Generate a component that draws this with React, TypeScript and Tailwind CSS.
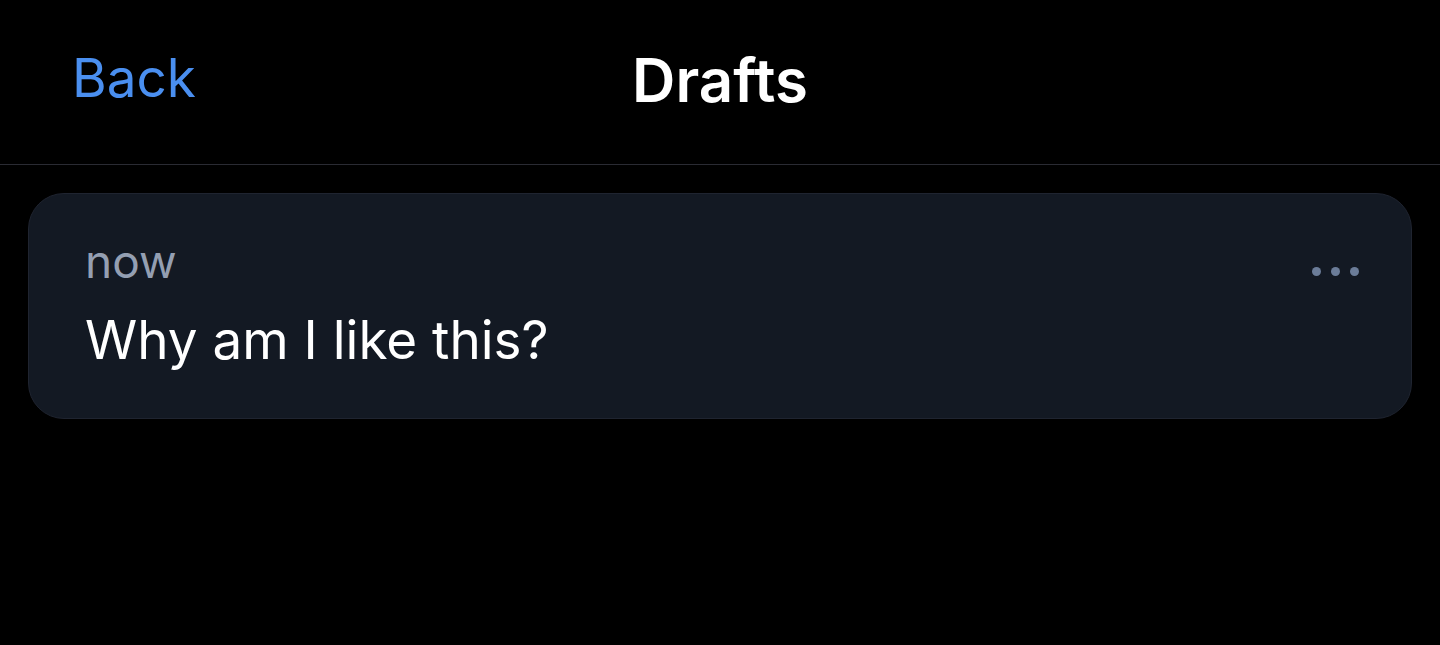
export default function App() {
  return (
    <div
      className="w-[1440px] h-[645px] bg-black overflow-hidden"
      style={{ fontFamily: "Inter, 'Noto Sans', sans-serif" }}
    >
      <header className="relative h-[165px] flex items-start justify-center pt-[44px] border-b border-[#2a2b33]">
        <span className="absolute left-[72px] top-[46px] text-[53px] leading-[64px] text-[#4a8ff0]">Back</span>
        <h1 className="text-[60px] leading-[72px] font-semibold text-white">Drafts</h1>
      </header>
      <div className="px-[28px] pt-[28px]">
        <div className="h-[226px] rounded-[36px] bg-[#131923] border border-[#1f2430] pl-[56px] pr-[52px] pt-[39px] flex justify-between">
          <div className="flex flex-col">
            <span className="text-[46px] leading-[56px] text-[#949fb2]">now</span>
            <span className="text-[53px] leading-[64px] text-white mt-[19px]">Why am I like this?</span>
          </div>
          <div className="flex gap-[10px] mt-[34px]">
            <span className="w-[9px] h-[9px] rounded-full bg-[#6b7c98]" />
            <span className="w-[9px] h-[9px] rounded-full bg-[#6b7c98]" />
            <span className="w-[9px] h-[9px] rounded-full bg-[#6b7c98]" />
          </div>
        </div>
      </div>
    </div>
  );
}
